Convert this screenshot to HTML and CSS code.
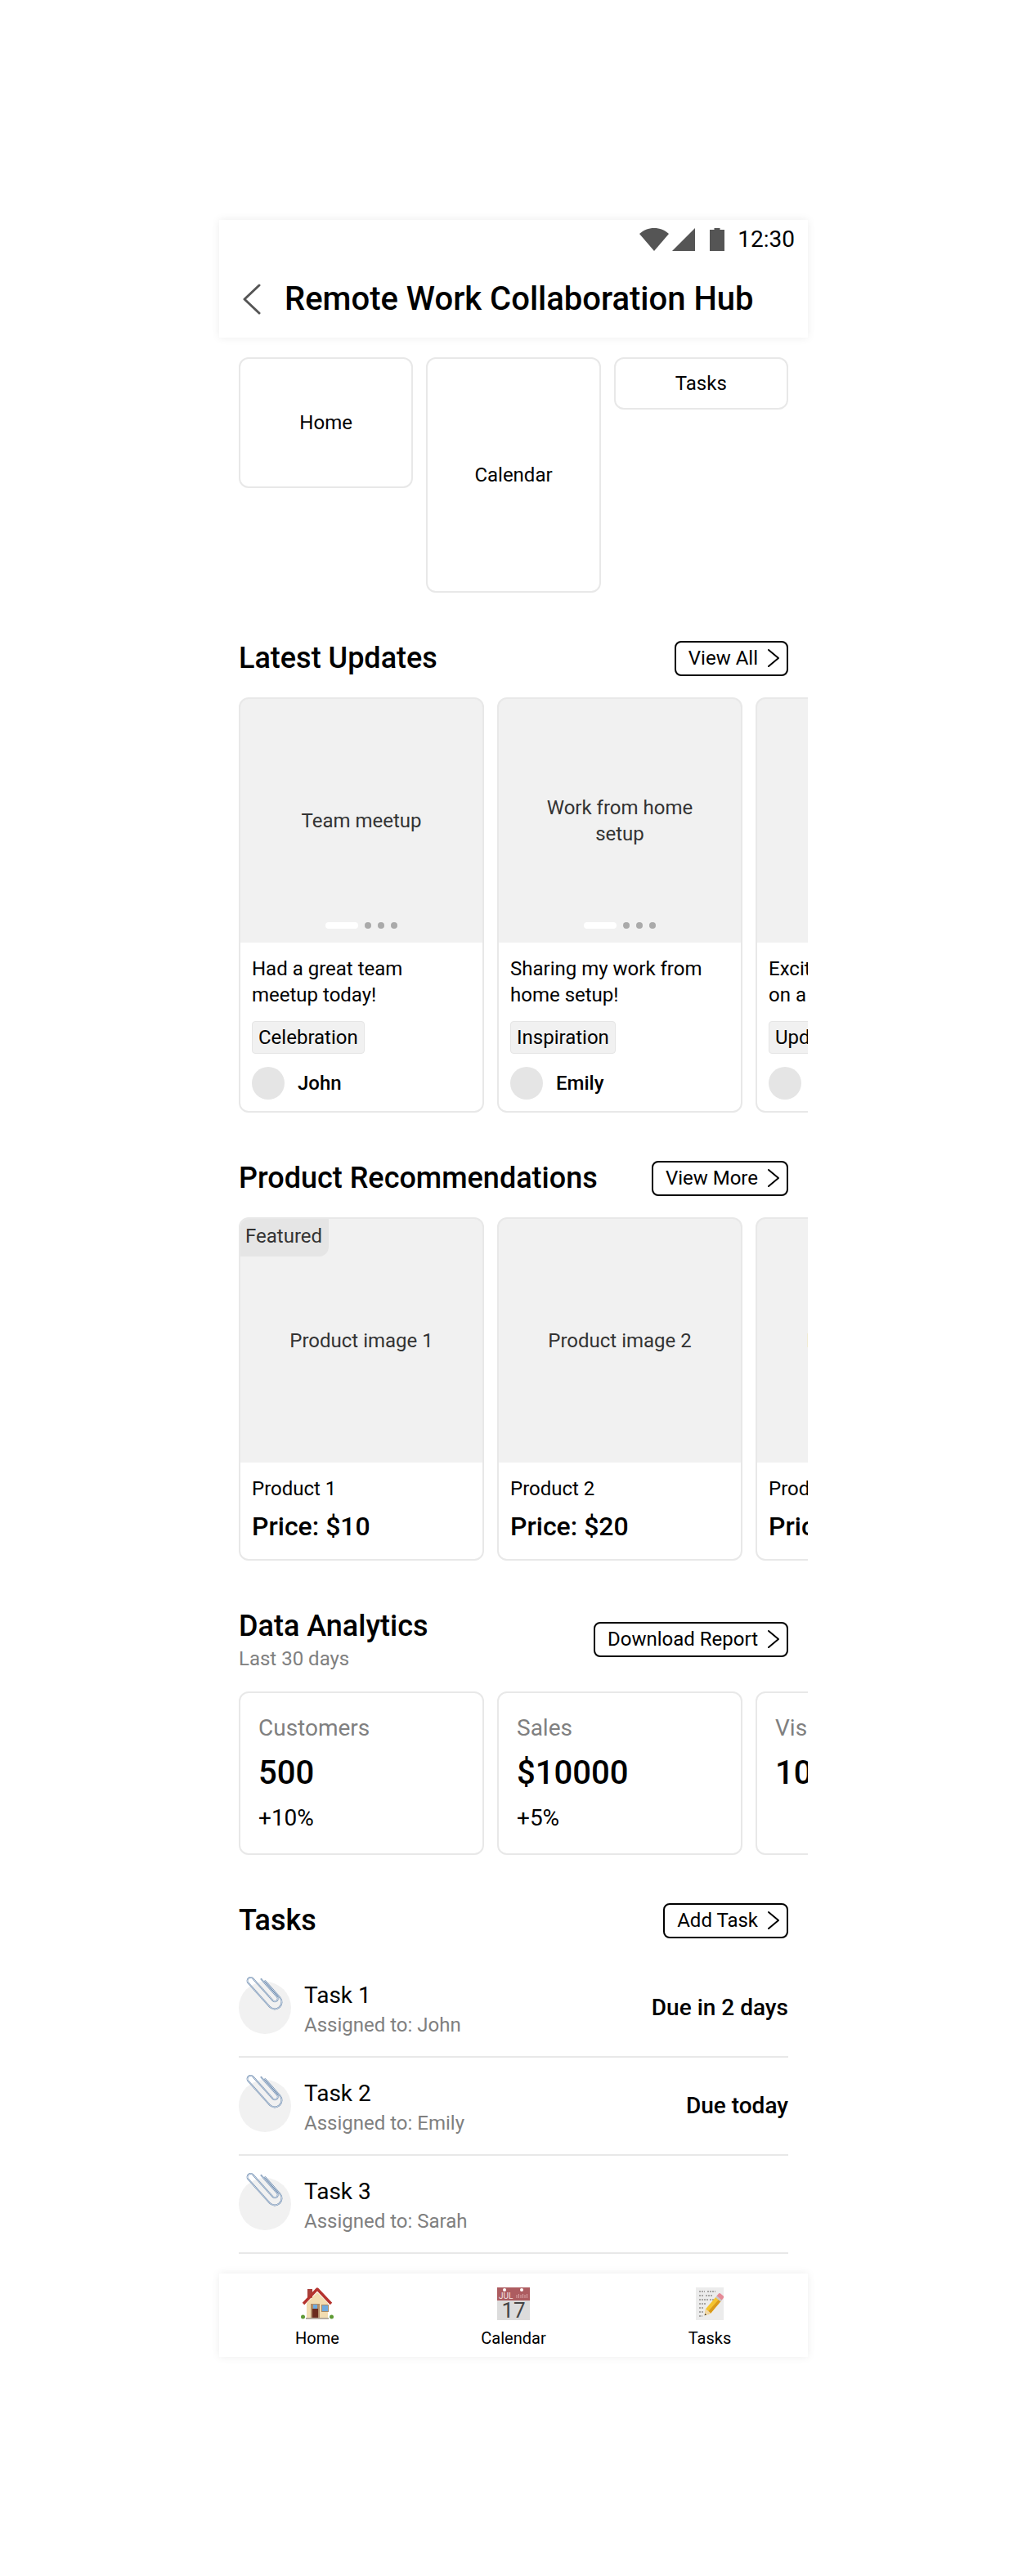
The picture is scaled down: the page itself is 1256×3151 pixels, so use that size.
FILE: index.html
```html
<!DOCTYPE html>
<html lang="en">
<head>
    <meta charset="UTF-8">
    <title>Remote Work Collaboration Hub</title>
    <link rel="stylesheet" href="styles.css">
</head>
<body>
    <svg class="defs" width="0" height="0">
        <symbol id="chevron" viewBox="0 0 24 24">
            <path d="M6 2 L18 12 L6 22" fill="none" stroke="#000" stroke-width="2" stroke-linecap="round" stroke-linejoin="round"/>
        </symbol>
        <symbol id="clip" viewBox="0 0 40 40" overflow="visible">
            <g transform="rotate(-42 20 21)" fill="none" stroke-linecap="round">
                <path d="M26 6 V35 a3.500 3.500 0 0 1 -7 0 V-1 a4 4 0 0 0 -8 0 V38 a8.500 8.500 0 0 0 17 0 V11" stroke="#6d8aac" stroke-width="1.900"/>
                <path d="M26 6 V35 a3.500 3.500 0 0 1 -7 0 V-1 a4 4 0 0 0 -8 0 V38 a8.500 8.500 0 0 0 17 0 V11" stroke="#dfe9f4" stroke-width=".8"/>
            </g>
        </symbol>
    </svg>

    <div class="phone">
        <!-- Status bar and title -->
        <header class="top-bar">
            <div class="status-bar">
                <svg class="status-wifi" viewBox="0 0 36 28" width="36" height="28"><path d="M18 28 L0 7 C5 2.500 11 0 18 0 C25 0 31 2.500 36 7 Z" fill="#555"/></svg>
                <svg class="status-signal" viewBox="0 0 28 28" width="28" height="28"><path d="M0 28 L28 0 V28 Z" fill="#555"/></svg>
                <svg class="status-battery" viewBox="0 0 18 28" width="18" height="28"><path d="M5.500 2 V0 H12.500 V2 H18 V28 H0 V2 Z" fill="#555"/></svg>
                <span class="status-time">12:30</span>
            </div>
            <div class="app-bar">
                <svg class="back-icon" viewBox="0 0 22 38" width="22" height="38"><path d="M20 2 L2 19 L20 36" fill="none" stroke="#555" stroke-width="3" stroke-linecap="round" stroke-linejoin="round"/></svg>
                <h1>Remote Work Collaboration Hub</h1>
            </div>
        </header>

        <main class="content">
            <nav class="quick-links">
                <a class="quick-link quick-home">Home</a>
                <a class="quick-link quick-calendar">Calendar</a>
                <a class="quick-link quick-tasks">Tasks</a>
            </nav>

            <!-- Latest Updates -->
            <section class="section">
                <div class="section-head">
                    <h2>Latest Updates</h2>
                    <button class="action">View All<svg width="24" height="24"><use href="#chevron"/></svg></button>
                </div>
                <div class="carousel">
                    <article class="card">
                        <div class="media">
                            <span>Team meetup</span>
                            <div class="dots"><i class="pill"></i><i></i><i></i><i></i></div>
                        </div>
                        <div class="card-body">
                            <p class="post-text">Had a great team meetup today!</p>
                            <span class="tag">Celebration</span>
                            <div class="author"><i class="avatar"></i><b>John</b></div>
                        </div>
                    </article>
                    <article class="card">
                        <div class="media">
                            <span>Work from home setup</span>
                            <div class="dots"><i class="pill"></i><i></i><i></i><i></i></div>
                        </div>
                        <div class="card-body">
                            <p class="post-text">Sharing my work from home setup!</p>
                            <span class="tag">Inspiration</span>
                            <div class="author"><i class="avatar"></i><b>Emily</b></div>
                        </div>
                    </article>
                    <article class="card">
                        <div class="media">
                            <span>New project</span>
                            <div class="dots"><i class="pill"></i><i></i><i></i><i></i></div>
                        </div>
                        <div class="card-body">
                            <p class="post-text">Excited to start working on a new project!</p>
                            <span class="tag">Update</span>
                            <div class="author"><i class="avatar"></i><b>Sarah</b></div>
                        </div>
                    </article>
                </div>
            </section>

            <!-- Product Recommendations -->
            <section class="section">
                <div class="section-head">
                    <h2>Product Recommendations</h2>
                    <button class="action">View More<svg width="24" height="24"><use href="#chevron"/></svg></button>
                </div>
                <div class="carousel">
                    <article class="card">
                        <div class="media">
                            <span class="badge">Featured</span>
                            <span>Product image 1</span>
                        </div>
                        <div class="card-body">
                            <p class="product-name">Product 1</p>
                            <p class="price">Price: $10</p>
                        </div>
                    </article>
                    <article class="card">
                        <div class="media"><span>Product image 2</span></div>
                        <div class="card-body">
                            <p class="product-name">Product 2</p>
                            <p class="price">Price: $20</p>
                        </div>
                    </article>
                    <article class="card">
                        <div class="media"><span>Product image 3</span></div>
                        <div class="card-body">
                            <p class="product-name">Product 3</p>
                            <p class="price">Price: $30</p>
                        </div>
                    </article>
                </div>
            </section>

            <!-- Data Analytics -->
            <section class="section">
                <div class="section-head">
                    <div>
                        <h2>Data Analytics</h2>
                        <p class="subtitle">Last 30 days</p>
                    </div>
                    <button class="action">Download Report<svg width="24" height="24"><use href="#chevron"/></svg></button>
                </div>
                <div class="carousel">
                    <article class="card metric">
                        <p class="metric-label">Customers</p>
                        <p class="metric-value">500</p>
                        <p class="metric-change">+10%</p>
                    </article>
                    <article class="card metric">
                        <p class="metric-label">Sales</p>
                        <p class="metric-value">$10000</p>
                        <p class="metric-change">+5%</p>
                    </article>
                    <article class="card metric">
                        <p class="metric-label">Visitors</p>
                        <p class="metric-value">1000</p>
                    </article>
                </div>
            </section>

            <!-- Tasks -->
            <section class="section">
                <div class="section-head">
                    <h2>Tasks</h2>
                    <button class="action">Add Task<svg width="24" height="24"><use href="#chevron"/></svg></button>
                </div>
                <ul class="task-list">
                    <li class="task">
                        <span class="task-icon"><svg width="40" height="40"><use href="#clip"/></svg></span>
                        <div class="task-info">
                            <p class="task-name">Task 1</p>
                            <p class="task-owner">Assigned to: John</p>
                        </div>
                        <span class="task-due">Due in 2 days</span>
                    </li>
                    <li class="task">
                        <span class="task-icon"><svg width="40" height="40"><use href="#clip"/></svg></span>
                        <div class="task-info">
                            <p class="task-name">Task 2</p>
                            <p class="task-owner">Assigned to: Emily</p>
                        </div>
                        <span class="task-due">Due today</span>
                    </li>
                    <li class="task">
                        <span class="task-icon"><svg width="40" height="40"><use href="#clip"/></svg></span>
                        <div class="task-info">
                            <p class="task-name">Task 3</p>
                            <p class="task-owner">Assigned to: Sarah</p>
                        </div>
                    </li>
                </ul>
            </section>
        </main>

        <!-- Bottom navigation -->
        <footer class="bottom-nav">
            <a class="nav-item">
                <svg viewBox="0 0 40 40" width="40" height="40">
                    <rect x="8" y="2" width="6" height="11" fill="#a8403a"/>
                    <path d="M7 19 L20 6 L33 19 V37 H7 Z" fill="#f2dcb0"/>
                    <path d="M3 20 L20 2 L37 20" fill="none" stroke="#b5332e" stroke-width="3.400" stroke-linejoin="round"/>
                    <rect x="12" y="20" width="11" height="17" fill="#b08c68"/>
                    <rect x="14" y="26" width="7" height="11" fill="#6b2a1c"/>
                    <rect x="15" y="21" width="5" height="5" fill="#6eaadf"/>
                    <rect x="25" y="21" width="9" height="9" fill="#a88a66"/>
                    <rect x="26" y="22" width="7" height="7" fill="#6eaadf"/>
                    <circle cx="2.500" cy="36" r="2.500" fill="#5e9a34"/>
                    <circle cx="37.500" cy="36" r="2.500" fill="#5e9a34"/>
                    <rect x="6" y="37" width="28" height="2" fill="#b5aca0"/>
                </svg>
                <span>Home</span>
            </a>
            <a class="nav-item">
                <svg viewBox="0 0 40 40" width="40" height="40">
                    <rect width="40" height="40" fill="#dcdcdc"/>
                    <rect width="40" height="16" fill="#ad5c60"/>
                    <circle cx="9" cy="3" r="2" fill="#fff"/>
                    <circle cx="30" cy="3" r="2" fill="#fff"/>
                    <path d="M24 13 V9 M26.500 13 V8 M29 13 V9 M31.500 13 V8 M34 13 V9 M36.500 13 V8" stroke="#d9a4a6" stroke-width="1"/>
                    <text class="cal-month" x="2" y="14">JUL</text>
                    <text class="cal-day" x="20" y="37">17</text>
                </svg>
                <span>Calendar</span>
            </a>
            <a class="nav-item">
                <svg viewBox="0 0 40 40" width="40" height="40">
                    <rect x="3" width="34" height="40" fill="#ececec"/>
                    <path d="M7 5 H14 M17 5 H27 M7 10 H12 M15 10 H24 M7 15 H18 M20 15 H27 M7 20 H16 M7 25 H13 M7 30 H12 M7 35 H11" stroke="#55524e" stroke-width=".9" stroke-dasharray="2 1" fill="none"/>
                    <g transform="rotate(40 24 22)">
                        <path d="M20 12 H28 V31 L24 38 L20 31 Z" fill="#f4c430"/>
                        <path d="M24.800 12 H28 V31 L24 38 Z" fill="#d99a1c"/>
                        <path d="M20 31 H28 L24 38 Z" fill="#f0d7a8"/>
                        <path d="M22.800 36 L25.200 36 L24 38 Z" fill="#333"/>
                        <rect x="20" y="5" width="8" height="7" rx="2" fill="#e58a96"/>
                        <rect x="20" y="10" width="8" height="2.500" fill="#c9c9c9"/>
                    </g>
                </svg>
                <span>Tasks</span>
            </a>
        </footer>
    </div>
</body>
</html>
```

FILE: styles.css
```css
/* General Page Styling */
* {
    box-sizing: border-box;
}

body {
    margin: 0;
    padding: 269px 0 268px;
    background-color: #fff;
    color: #000;
    font-family: "Roboto", "Liberation Sans", sans-serif;
    font-size: 24px;
    line-height: 32px;
}

p,
h1,
h2,
ul {
    margin: 0;
    padding: 0;
}

.defs {
    position: absolute;
}

.phone {
    width: 720px;
    margin: 0 auto;
}

/* Top Bar */
.top-bar {
    height: 144px;
    background-color: #fff;
    box-shadow: 0 0 10px rgba(0, 0, 0, 0.08);
}

.status-bar {
    display: flex;
    align-items: center;
    justify-content: flex-end;
    height: 48px;
    padding-right: 16px;
}

.status-signal {
    margin-left: 4px;
}

.status-battery {
    margin-left: 18px;
}

.status-time {
    margin-left: 16px;
    font-size: 28px;
}

.app-bar {
    display: flex;
    align-items: center;
    height: 96px;
    padding: 2px 0 0 29px;
}

.back-icon {
    margin-right: 29px;
}

h1 {
    font-size: 40px;
    line-height: 48px;
    font-weight: 500;
}

/* Content */
.content {
    padding: 24px;
}

.quick-links {
    display: grid;
    grid-template-columns: repeat(3, 1fr);
    gap: 16px;
    align-items: start;
}

.quick-link {
    display: flex;
    align-items: center;
    justify-content: center;
    border: 2px solid #e8e8e8;
    border-radius: 12px;
}

.quick-home {
    height: 160px;
}

.quick-calendar {
    height: 288px;
}

.quick-tasks {
    height: 64px;
}

.section {
    margin-top: 56px;
}

.section-head {
    display: flex;
    align-items: center;
    justify-content: space-between;
    margin-bottom: 24px;
}

h2 {
    font-size: 36px;
    line-height: 48px;
    font-weight: 500;
}

.subtitle {
    color: #808080;
}

.action {
    display: flex;
    align-items: center;
    height: 43px;
    padding: 0 4px 0 15px;
    border: 2px solid #000;
    border-radius: 8px;
    background-color: #fff;
    color: #000;
    font-family: inherit;
    font-size: 24px;
}

.action svg {
    margin-left: 7px;
}

/* Cards */
.carousel {
    display: flex;
    gap: 16px;
    margin-right: -24px;
    overflow: hidden;
}

.card {
    flex: 0 0 300px;
    border: 2px solid #e8e8e8;
    border-radius: 12px;
    background-color: #fff;
    overflow: hidden;
}

.media {
    position: relative;
    display: flex;
    align-items: center;
    justify-content: center;
    height: 300px;
    margin: -2px -2px 0;
    padding: 0 32px;
    border: 2px solid #d9d9d9;
    border-bottom: 0;
    border-radius: 12px 12px 0 0;
    background-color: #f1f1f1;
    color: #333;
    text-align: center;
}

.dots {
    position: absolute;
    left: 0;
    right: 0;
    bottom: 17px;
    display: flex;
    justify-content: center;
    gap: 8px;
}

.dots i {
    width: 8px;
    height: 8px;
    border-radius: 50%;
    background-color: #aaa;
}

.dots .pill {
    width: 40px;
    border-radius: 4px;
    background-color: #fff;
}

.card-body {
    padding: 16px 14px 14px;
}

.post-text {
    margin-bottom: 16px;
}

.tag {
    display: block;
    width: fit-content;
    height: 40px;
    padding: 0 7px;
    border: 1px solid #e5e5e5;
    border-radius: 4px;
    background-color: #f1f1f1;
    line-height: 38px;
}

.author {
    display: flex;
    align-items: center;
    gap: 16px;
    margin-top: 16px;
}

.avatar {
    width: 40px;
    height: 40px;
    border-radius: 50%;
    background-color: #e5e5e5;
}

.author b {
    font-weight: 500;
}

.badge {
    position: absolute;
    top: -2px;
    left: -2px;
    height: 48px;
    padding: 0 8px;
    border-radius: 0 0 12px 0;
    background-color: #e5e5e5;
    line-height: 46px;
}

.product-name {
    margin-bottom: 8px;
}

.price {
    margin-bottom: 3px;
    font-size: 32px;
    line-height: 45px;
    font-weight: 500;
}

/* Analytics */
.metric {
    height: 200px;
    padding: 23px 22px;
}

.metric-label {
    color: #808080;
    font-size: 28px;
    line-height: 40px;
}

.metric-value {
    margin-top: 7px;
    font-size: 40px;
    line-height: 56px;
    font-weight: 500;
}

.metric-change {
    margin-top: 9px;
    font-size: 28px;
    line-height: 36px;
}

/* Tasks */
.task-list {
    list-style: none;
}

.task {
    display: flex;
    align-items: center;
    gap: 16px;
    height: 120px;
    border-bottom: 2px solid #e8e8e8;
}

.task-icon {
    position: relative;
    flex: 0 0 64px;
    height: 64px;
    border-radius: 50%;
    background-color: #f1f1f1;
}

.task-icon svg {
    position: absolute;
    top: -9px;
    left: 13px;
    overflow: visible;
}

.task-info {
    flex: 1;
    padding-top: 6px;
}

.task-name {
    font-size: 28px;
    line-height: 36px;
}

.task-owner {
    color: #808080;
    line-height: 36px;
}

.task-due {
    font-size: 28px;
    font-weight: 500;
}

/* Bottom Navigation */
.bottom-nav {
    display: grid;
    grid-template-columns: repeat(3, 1fr);
    height: 102px;
    padding-top: 17px;
    background-color: #fff;
    box-shadow: 0 0 10px rgba(0, 0, 0, 0.08);
}

.nav-item {
    display: flex;
    flex-direction: column;
    align-items: center;
    font-size: 20px;
    line-height: 24px;
}

.nav-item svg {
    margin-bottom: 10px;
}

.cal-month {
    fill: #f3e3e3;
    font-size: 10px;
}

.cal-day {
    fill: #444;
    font-size: 26px;
    text-anchor: middle;
}
```
